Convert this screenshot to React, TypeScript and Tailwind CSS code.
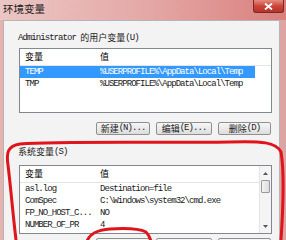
import React from "react";

const mono = "font-['Liberation_Mono','Noto_Sans_CJK_SC',monospace] text-[9px] tracking-[-0.95px]";
const cjk = "font-['Noto_Sans_CJK_SC',sans-serif] text-[9px]";

interface Row {
  name: string;
  value: string;
  selected?: boolean;
}

const userVars: Row[] = [
  { name: "TEMP", value: "%USERPROFILE%\\AppData\\Local\\Temp", selected: true },
  { name: "TMP", value: "%USERPROFILE%\\AppData\\Local\\Temp" },
];

const sysVars: Row[] = [
  { name: "asl.log", value: "Destination=file" },
  { name: "ComSpec", value: "C:\\Windows\\system32\\cmd.exe" },
  { name: "FP_NO_HOST_C...", value: "NO" },
  { name: "NUMBER_OF_PR", value: "4" },
];

const Header = () => (
  <div className="flex h-[17px] shrink-0 items-center border-b border-[#e5e5e5] bg-white pl-[5px]">
    <span className={`${cjk} w-[75px]`}>变量</span>
    <span className={cjk}>值</span>
  </div>
);

const VarRow = ({ row }: { row: Row }) => (
  <div
    className={`flex h-[12px] shrink-0 items-center pl-[5px] leading-[12px] ${
      row.selected ? "mr-[16px] bg-[#3399ff] text-white" : "text-[#1a1a1a]"
    }`}
  >
    <span className={`${mono} w-[75px] whitespace-nowrap`}>{row.name}</span>
    <span className={`${mono} whitespace-nowrap`}>{row.value}</span>
  </div>
);

const Button = ({ label, mnemonic, width }: { label?: string; mnemonic?: string; width: string }) => (
  <div
    className={`${width} flex h-[13px] items-center justify-center rounded-[2px] border border-[#8e8f8f] bg-gradient-to-b from-[#f6f6f6] to-[#dddddd] text-[#222]`}
  >
    {label && <span className={cjk}>{label}</span>}
    {mnemonic && <span className={mono}>{mnemonic}</span>}
  </div>
);

const App = () => {
  return (
    <div className="relative flex h-[240px] w-[286px] flex-col overflow-hidden bg-gradient-to-r from-[#e6b2b0] via-[#e6b8b6] to-[#dca4a2]">
      {/* title bar */}
      <div className="flex h-[20px] shrink-0 items-start bg-gradient-to-r from-[#ebc6c4] via-[#e4a9a7] to-[#d9807e]">
        <span className="pl-[3px] pt-[2px] font-['Noto_Sans_CJK_SC',sans-serif] text-[10.5px] leading-[13px] text-[#1c1c1c]">
          环境变量
        </span>
        <div className="ml-auto mr-[2px] flex h-[13px] w-[31px] items-center justify-center rounded-b-[3px] border border-t-0 border-[#7a2a24] bg-gradient-to-b from-[#e58a7e] via-[#c9453a] to-[#b8322a]">
          <svg width="9" height="7" viewBox="0 0 9 7">
            <path d="M1 0.5 L8 6.5 M8 0.5 L1 6.5" stroke="white" strokeWidth="1.8" />
          </svg>
        </div>
      </div>

      {/* client area */}
      <div className="ml-[3px] mr-[6px] flex flex-1 flex-col border border-b-0 border-[#b5b5b5] bg-[#f3f3f3] pl-[14px]">
        <div className="mt-[12px] flex h-[10px] items-center leading-[10px] text-[#1a1a1a]">
          <span className={mono}>Administrator&nbsp;</span>
          <span className={cjk}>的用户变量</span>
          <span className={mono}>(U)</span>
        </div>

        <div className="ml-[1px] mt-[5px] flex h-[65px] w-[253px] flex-col overflow-hidden border border-[#828790] bg-white">
          <Header />
          {userVars.map((r) => (
            <VarRow key={r.name} row={r} />
          ))}
        </div>

        <div className="mt-[9px] flex gap-[6px] pl-[78px]">
          <Button label="新建" mnemonic="(N)..." width="w-[54px]" />
          <Button label="编辑" mnemonic="(E)..." width="w-[56px]" />
          <Button label="删除" mnemonic="(D)" width="w-[53px]" />
        </div>

        <div className="mt-[12px] flex h-[10px] items-center leading-[10px] text-[#1a1a1a]">
          <span className={cjk}>系统变量</span>
          <span className={mono}>(S)</span>
        </div>

        <div className="ml-[1px] mt-[8px] flex h-[69px] w-[253px] overflow-hidden border border-[#828790] bg-white">
          <div className="flex flex-1 flex-col">
            <Header />
            {sysVars.map((r) => (
              <VarRow key={r.name} row={r} />
            ))}
          </div>
          <div className="flex w-[12px] flex-col border-l border-[#e3e3e3] bg-[#f4f4f4]">
            <div className="flex h-[14px] items-center justify-center">
              <svg width="5" height="3" viewBox="0 0 5 3">
                <path d="M0 3 L2.5 0 L5 3 Z" fill="#555" />
              </svg>
            </div>
            <div className="mx-[1px] h-[13px] rounded-[1px] border border-[#9a9a9a] bg-gradient-to-r from-[#f2f2f2] to-[#dcdcdc]" />
            <div className="flex-1" />
            <div className="flex h-[14px] items-center justify-center">
              <svg width="5" height="3" viewBox="0 0 5 3">
                <path d="M0 0 L2.5 3 L5 0 Z" fill="#555" />
              </svg>
            </div>
          </div>
        </div>

        {/* lower buttons, cut off by the window edge */}
        <div className="mt-[4px] flex gap-[6px] pl-[78px]">
          <Button width="w-[54px]" />
          <Button width="w-[56px]" />
          <Button width="w-[53px]" />
        </div>
      </div>

      {/* red hand-drawn annotation */}
      <svg
        className="pointer-events-none absolute left-0 top-0"
        width="286"
        height="240"
        viewBox="0 0 286 240"
      >
        <path
          d="M16 240 C13 215 11 190 8 165 C6 152 8 146 20 144 C60 141 150 143 230 142 C262 141 276 142 281 152 C285 175 283 210 281 240"
          fill="none"
          stroke="#e0141a"
          strokeWidth="3"
          strokeLinecap="round"
        />
        <path
          d="M87 241 C90 234 96 230 110 229 C125 228 140 229 146 232 C149 235 150 238 151 241"
          fill="none"
          stroke="#e0141a"
          strokeWidth="3"
          strokeLinecap="round"
        />
      </svg>
    </div>
  );
};

export default App;
